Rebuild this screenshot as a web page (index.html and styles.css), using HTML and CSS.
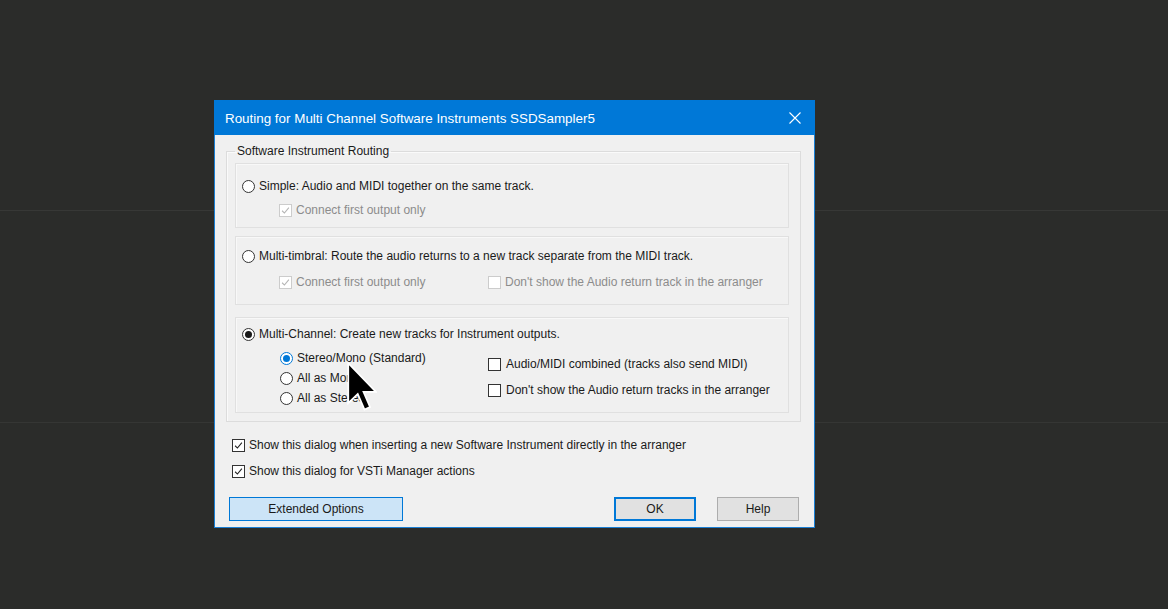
FILE: index.html
```html
<!DOCTYPE html>
<html lang="en">
<head>
    <meta charset="UTF-8">
    <title>Routing for Multi Channel Software Instruments</title>
    <link rel="stylesheet" href="styles.css">
</head>
<body>
    <div class="dialog">
        <div class="titlebar">
            <span class="title">Routing for Multi Channel Software Instruments SSDSampler5</span>
            <svg class="close" width="12" height="12" viewBox="0 0 12 12">
                <path d="M0.5 0.5 L11.5 11.5 M11.5 0.5 L0.5 11.5" stroke="#fff" stroke-width="1.1" fill="none"/>
            </svg>
        </div>

        <div class="content">
            <fieldset class="group">
                <legend>Software Instrument Routing</legend>

                <!-- simple -->
                <div class="panel panel-simple">
                    <div class="row">
                        <span class="radio"></span>
                        <span>Simple: Audio and MIDI together on the same track.</span>
                    </div>
                    <div class="row sub">
                        <span class="check disabled checked"><svg viewBox="0 0 13 13"><path d="M2.5 6.8 L5.2 9.5 L10.5 3"/></svg></span>
                        <span class="muted">Connect first output only</span>
                    </div>
                </div>

                <!-- multi-timbral -->
                <div class="panel panel-timbral">
                    <div class="row">
                        <span class="radio"></span>
                        <span>Multi-timbral: Route the audio returns to a new track separate from the MIDI track.</span>
                    </div>
                    <div class="cols">
                        <div class="row">
                            <span class="check disabled checked"><svg viewBox="0 0 13 13"><path d="M2.5 6.8 L5.2 9.5 L10.5 3"/></svg></span>
                            <span class="muted">Connect first output only</span>
                        </div>
                        <div class="row">
                            <span class="check disabled"></span>
                            <span class="muted">Don't show the Audio return track in the arranger</span>
                        </div>
                    </div>
                </div>

                <!-- multi-channel -->
                <div class="panel panel-multi">
                    <div class="row">
                        <span class="radio on"></span>
                        <span>Multi-Channel: Create new tracks for Instrument outputs.</span>
                    </div>
                    <div class="cols">
                        <div class="stack left">
                            <div class="row">
                                <span class="radio on focus"></span>
                                <span>Stereo/Mono (Standard)</span>
                            </div>
                            <div class="row">
                                <span class="radio"></span>
                                <span>All as Mono</span>
                            </div>
                            <div class="row">
                                <span class="radio"></span>
                                <span>All as Stereo</span>
                            </div>
                        </div>
                        <div class="stack right">
                            <div class="row">
                                <span class="check"></span>
                                <span>Audio/MIDI combined (tracks also send MIDI)</span>
                            </div>
                            <div class="row">
                                <span class="check"></span>
                                <span>Don't show the Audio return tracks in the arranger</span>
                            </div>
                        </div>
                    </div>
                </div>
            </fieldset>

            <div class="options">
                <div class="row">
                    <span class="check checked"><svg viewBox="0 0 13 13"><path d="M2.5 6.8 L5.2 9.5 L10.5 3"/></svg></span>
                    <span>Show this dialog when inserting a new Software Instrument directly in the arranger</span>
                </div>
                <div class="row">
                    <span class="check checked"><svg viewBox="0 0 13 13"><path d="M2.5 6.8 L5.2 9.5 L10.5 3"/></svg></span>
                    <span>Show this dialog for VSTi Manager actions</span>
                </div>
            </div>

            <div class="buttons">
                <button class="btn btn-ext">Extended Options</button>
                <span class="spacer"></span>
                <button class="btn btn-ok">OK</button>
                <button class="btn">Help</button>
            </div>
        </div>
    </div>

    <svg class="cursor" width="30" height="52" viewBox="0 0 12 20">
        <path d="M0.5 0.5 L0.5 16.5 L4.3 12.8 L7 19 L9.2 18 L6.6 11.9 L11.5 11.9 Z" fill="#000" stroke="#fff" stroke-width="0.7" stroke-linejoin="miter"/>
    </svg>
</body>
</html>
```

FILE: styles.css
```css
html, body {
    height: 100%;
}

body {
    margin: 0;
    background-color: #2b2c2a;
    background-image:
        linear-gradient(#373836, #373836),
        linear-gradient(#353634, #353634);
    background-size: 100% 1px, 100% 1px;
    background-position: 0 210px, 0 422px;
    background-repeat: no-repeat;
    font-family: "Liberation Sans", Arial, sans-serif;
    font-size: 12px;
    color: #1a1a1a;
}

.dialog {
    width: 601px;
    height: 428px;
    box-sizing: border-box;
    margin: 100px 0 0 214px;
    background: #f0f0f0;
    border: 1px solid #1a7fd4;
    border-top: 0;
}

.titlebar {
    height: 35px;
    box-sizing: border-box;
    margin: 0 -1px;
    background: #0078d7;
    display: flex;
    align-items: center;
    padding: 1px 14px 0 11px;
    color: #fff;
}

.title {
    font-size: 13.4px;
    flex: 1;
}

.close {
    display: block;
}

.content {
    padding: 0 13px 0 11px;
}

/* group box */
.group {
    margin: 8px 0 0;
    padding: 0 0 8px;
    border: 1px solid #dcdcdc;
    box-shadow: inset 1px 1px 0 #fafafa;
    min-width: 0;
}

.group legend {
    margin-left: 8px;
    padding: 0 2px;
    line-height: 16px;
    color: #1a1a1a;
}

.panel {
    box-sizing: border-box;
    margin: 4px 11px 0 8px;
    border: 1px solid #e0e0e0;
    box-shadow: inset 1px 1px 0 #f8f8f8;
    padding-left: 6px;
}

.panel-simple {
    height: 65px;
    padding-top: 12px;
}

.panel-simple .sub {
    margin-top: 4px;
}

.panel-timbral {
    height: 69px;
    margin-top: 8px;
    padding-top: 9px;
}

.panel-timbral .cols {
    margin-top: 6px;
}

.panel-multi {
    height: 96px;
    margin-top: 12px;
    padding-top: 6px;
}

.panel-multi .cols {
    margin-top: 4px;
}

.row {
    height: 20px;
    display: flex;
    align-items: center;
    gap: 4px;
    white-space: nowrap;
}

.sub {
    padding-left: 37px;
}

.cols {
    display: grid;
    grid-template-columns: 209px 1fr;
    padding-left: 37px;
}

.stack.left {
    padding-left: 1px;
}

.stack.right {
    padding-top: 6px;
    display: flex;
    flex-direction: column;
    gap: 6px;
}

.stack.right .row {
    gap: 5px;
}

.muted {
    color: #8c8c8c;
}

/* radio */
.radio {
    width: 13px;
    height: 13px;
    box-sizing: border-box;
    border: 1px solid #333;
    border-radius: 50%;
    background: #fff;
    display: flex;
    align-items: center;
    justify-content: center;
    flex: none;
}

.radio.on::after {
    content: "";
    width: 7px;
    height: 7px;
    border-radius: 50%;
    background: #1a1a1a;
}

.radio.focus {
    border-color: #0078d7;
}

.radio.focus::after {
    background: #0078d7;
}

/* checkbox */
.check {
    width: 13px;
    height: 13px;
    box-sizing: border-box;
    border: 1px solid #333;
    background: #fff;
    flex: none;
    display: block;
}

.check svg {
    display: block;
    width: 11px;
    height: 11px;
}

.check svg path {
    fill: none;
    stroke: #222;
    stroke-width: 1.3;
}

.check.disabled {
    border-color: #cccccc;
    background: #fff;
}

.check.disabled svg path {
    stroke: #b4b4b4;
}

.options {
    margin: 13px 0 0 6px;
    display: flex;
    flex-direction: column;
    gap: 6px;
}

/* buttons */
.buttons {
    display: flex;
    margin: 16px 2px 0 3px;
    gap: 21px;
}

.spacer {
    flex: 1;
}

.btn {
    height: 24px;
    width: 82px;
    box-sizing: border-box;
    font-family: inherit;
    font-size: 12px;
    color: #1a1a1a;
    background: #e1e1e1;
    border: 1px solid #adadad;
    padding: 0;
}

.btn-ext {
    width: 174px;
    background: #cce4f7;
    border-color: #0078d7;
}

.btn-ok {
    border: 2px solid #0078d7;
    background: #e1e1e1;
}

.cursor {
    position: absolute;
    left: 347px;
    top: 361px;
}
```
